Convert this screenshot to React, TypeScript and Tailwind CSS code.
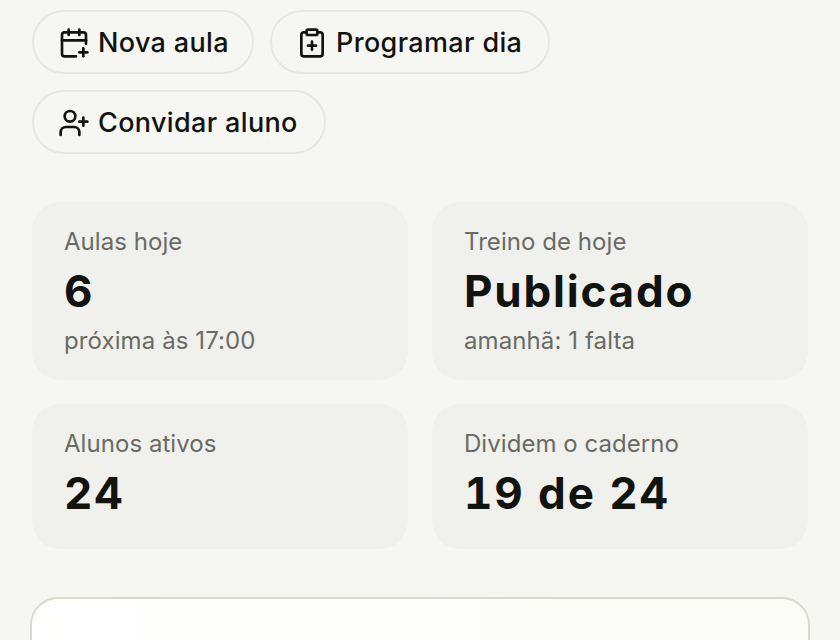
import { CalendarPlus, ClipboardPlus, UserPlus } from "lucide-react";

const FONT = "font-['Inter','Noto_Sans',sans-serif]";

const ACTIONS = [
  { label: "Nova aula", icon: CalendarPlus, width: "w-[222px]" },
  { label: "Programar dia", icon: ClipboardPlus, width: "w-[280px]" },
  { label: "Convidar aluno", icon: UserPlus, width: "w-[294px]" },
];

const STATS = [
  { label: "Aulas hoje", value: "6", note: "próxima às 17:00" },
  { label: "Treino de hoje", value: "Publicado", note: "amanhã: 1 falta" },
  { label: "Alunos ativos", value: "24" },
  { label: "Dividem o caderno", value: "19 de 24" },
];

export default function App(): React.ReactElement {
  return (
    <div className={`h-[640px] overflow-hidden bg-[#f6f7f3] pt-[10px] ${FONT}`}>
      {/* Quick actions */}
      <div className="flex flex-wrap gap-4 px-8">
        {ACTIONS.map(({ label, icon: Icon, width }) => (
          <button
            key={label}
            className={`flex h-16 items-center gap-2 rounded-full border-2 border-[#e6e7e1] pl-6 pt-px text-[27px] font-medium tracking-[0.35px] text-[#11130f] ${width}`}
          >
            <Icon className="h-8 w-8 shrink-0" strokeWidth={2} />
            <span className="pt-px">{label}</span>
          </button>
        ))}
      </div>

      {/* Stats */}
      <div className="mt-12 grid grid-cols-2 gap-6 px-8">
        {STATS.map((stat) => (
          <div key={stat.label} className="rounded-[28px] bg-[#f0f1ed] px-8 pb-7 pt-6">
            <p className="text-2xl leading-8 tracking-[0.05px] text-[#696b64]">{stat.label}</p>
            <p className="mt-[5px] text-[44px] font-bold tabular-nums leading-[56px] tracking-[1.8px] text-[#11130f]">
              {stat.value}
            </p>
            {stat.note && (
              <p className="-mb-[5px] mt-[6px] text-2xl leading-8 tracking-[0.1px] text-[#696b64]">{stat.note}</p>
            )}
          </div>
        ))}
      </div>

      {/* Next section, cut off by the viewport */}
      <div className="mx-[30px] mt-12 h-[200px] rounded-[28px] border-2 border-[#d9dace] bg-gradient-to-r from-white to-[#fbfbf7]" />
    </div>
  );
}
